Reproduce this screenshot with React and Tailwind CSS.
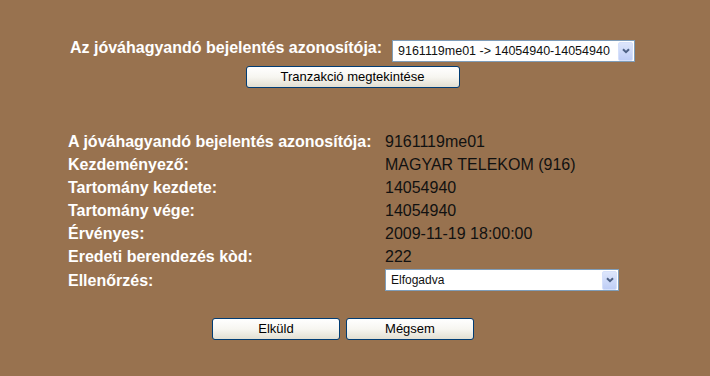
import React from "react";

const rows = [
  ["A jóváhagyandó bejelentés azonosítója:", "9161119me01"],
  ["Kezdeményező:", "MAGYAR TELEKOM (916)"],
  ["Tartomány kezdete:", "14054940"],
  ["Tartomány vége:", "14054940"],
  ["Érvényes:", "2009-11-19 18:00:00"],
  ["Eredeti berendezés kòd:", "222"],
];

const Arrow = () => (
  <div className="w-[15px] h-[19px] mr-[1px] flex items-center justify-center rounded-[2px] border border-[#d5e0fb] bg-gradient-to-b from-[#dde6fc] to-[#bfcef6]">
    <svg width="8" height="6" viewBox="0 0 8 6">
      <path d="M1 1.2 L4 4.2 L7 1.2" fill="none" stroke="#4d6185" strokeWidth="2" />
    </svg>
  </div>
);

const FakeSelect = ({ value, width, textSize }) => (
  <div
    className={`h-[22px] ${width} flex items-center justify-between bg-white border border-[#7f9db9] pl-[5px] text-[#111] ${textSize}`}
  >
    <span className="whitespace-nowrap">{value}</span>
    <Arrow />
  </div>
);

const XpButton = ({ label, width }) => (
  <button
    className={`h-[22px] ${width} flex items-center justify-center rounded-[3px] border border-[#003c74] bg-gradient-to-b from-white via-[#f7f6f1] to-[#e2dfd2] text-[13px] text-black`}
  >
    {label}
  </button>
);

const App = () => {
  return (
    <div
      className="w-[710px] h-[376px] bg-[#98724f] pt-[40px]"
      style={{ fontFamily: '"Liberation Sans", Arial, sans-serif' }}
    >
      <div className="ml-[70px] w-[565px] flex flex-col items-center">
        <div className="w-full flex items-start">
          <span className="text-[16px] leading-4 font-bold text-white whitespace-nowrap">
            Az jóváhagyandó bejelentés azonosítója:
          </span>
          <div className="ml-auto">
            <FakeSelect
              value="9161119me01 -> 14054940-14054940"
              width="w-[243px]"
              textSize="text-[12.5px]"
            />
          </div>
        </div>
        <div className="mt-[4px]">
          <XpButton label="Tranzakció megtekintése" width="w-[214px]" />
        </div>
      </div>

      <div className="ml-[68px] mt-[42px] flex flex-col">
        {rows.map(([label, value]) => (
          <div key={label} className="h-[23px] flex items-center text-[16px] leading-[23px]">
            <span className="w-[317px] font-bold text-white whitespace-nowrap">{label}</span>
            <span className="text-[#111] whitespace-nowrap">{value}</span>
          </div>
        ))}
        <div className="h-[24px] flex items-center text-[16px] leading-[23px]">
          <span className="w-[317px] font-bold text-white">Ellenőrzés:</span>
          <FakeSelect value="Elfogadva" width="w-[234px]" textSize="text-[12px]" />
        </div>
      </div>

      <div className="ml-[212px] mt-[26px] flex gap-[6px]">
        <XpButton label="Elküld" width="w-[128px]" />
        <XpButton label="Mégsem" width="w-[128px]" />
      </div>
    </div>
  );
};

export default App;
